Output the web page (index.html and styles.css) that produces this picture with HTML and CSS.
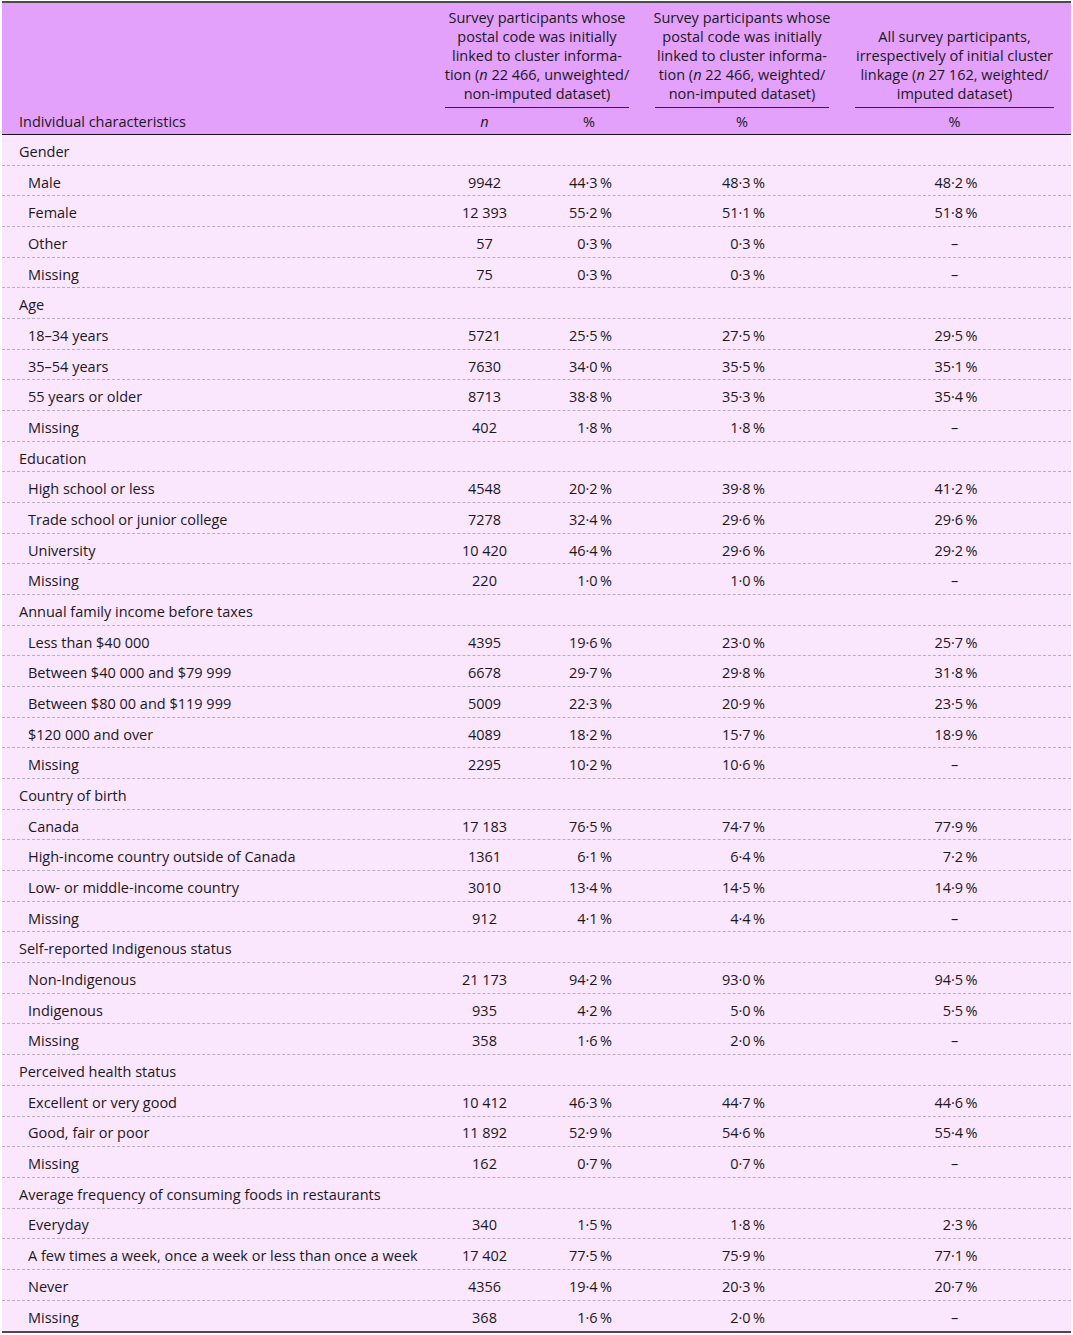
FILE: index.html
```html
<!DOCTYPE html>
<html lang="en">
<head>
    <meta charset="UTF-8">
    <meta name="viewport" content="width=device-width, initial-scale=1">
    <title>Individual characteristics</title>
    <link rel="stylesheet" href="styles.css">
</head>
<body>
<div class="data-table">
    <div class="table-head">
        <div class="group group-1">
            <div class="group-text">Survey participants whose<br>postal code was initially<br>linked to cluster informa-<br>tion (<i>n</i> 22 466, unweighted/<br>non-imputed dataset)</div>
            <div class="group-rule"></div>
        </div>
        <div class="group group-2">
            <div class="group-text">Survey participants whose<br>postal code was initially<br>linked to cluster informa-<br>tion (<i>n</i> 22 466, weighted/<br>non-imputed dataset)</div>
            <div class="group-rule"></div>
        </div>
        <div class="group group-3">
            <div class="group-text">All survey participants,<br>irrespectively of initial cluster<br>linkage (<i>n</i> 27 162, weighted/<br>imputed dataset)</div>
            <div class="group-rule"></div>
        </div>
        <div class="head-label">Individual characteristics</div>
        <div class="head-cell"><i>n</i></div>
        <div class="head-cell">%</div>
        <div class="head-cell">%</div>
        <div class="head-cell">%</div>
    </div>
    <div class="table-body">
        <div class="row section"><div class="label">Gender</div></div>
        <div class="row"><div class="label">Male</div><div class="n">9942</div><div class="p"><span>44·3&#8201;%</span></div><div class="p"><span>48·3&#8201;%</span></div><div class="p"><span>48·2&#8201;%</span></div></div>
        <div class="row"><div class="label">Female</div><div class="n">12 393</div><div class="p"><span>55·2&#8201;%</span></div><div class="p"><span>51·1&#8201;%</span></div><div class="p"><span>51·8&#8201;%</span></div></div>
        <div class="row"><div class="label">Other</div><div class="n">57</div><div class="p"><span>0·3&#8201;%</span></div><div class="p"><span>0·3&#8201;%</span></div><div class="p"><span class="dash">–</span></div></div>
        <div class="row"><div class="label">Missing</div><div class="n">75</div><div class="p"><span>0·3&#8201;%</span></div><div class="p"><span>0·3&#8201;%</span></div><div class="p"><span class="dash">–</span></div></div>

        <div class="row section"><div class="label">Age</div></div>
        <div class="row"><div class="label">18–34 years</div><div class="n">5721</div><div class="p"><span>25·5&#8201;%</span></div><div class="p"><span>27·5&#8201;%</span></div><div class="p"><span>29·5&#8201;%</span></div></div>
        <div class="row"><div class="label">35–54 years</div><div class="n">7630</div><div class="p"><span>34·0&#8201;%</span></div><div class="p"><span>35·5&#8201;%</span></div><div class="p"><span>35·1&#8201;%</span></div></div>
        <div class="row"><div class="label">55 years or older</div><div class="n">8713</div><div class="p"><span>38·8&#8201;%</span></div><div class="p"><span>35·3&#8201;%</span></div><div class="p"><span>35·4&#8201;%</span></div></div>
        <div class="row"><div class="label">Missing</div><div class="n">402</div><div class="p"><span>1·8&#8201;%</span></div><div class="p"><span>1·8&#8201;%</span></div><div class="p"><span class="dash">–</span></div></div>

        <div class="row section"><div class="label">Education</div></div>
        <div class="row"><div class="label">High school or less</div><div class="n">4548</div><div class="p"><span>20·2&#8201;%</span></div><div class="p"><span>39·8&#8201;%</span></div><div class="p"><span>41·2&#8201;%</span></div></div>
        <div class="row"><div class="label">Trade school or junior college</div><div class="n">7278</div><div class="p"><span>32·4&#8201;%</span></div><div class="p"><span>29·6&#8201;%</span></div><div class="p"><span>29·6&#8201;%</span></div></div>
        <div class="row"><div class="label">University</div><div class="n">10 420</div><div class="p"><span>46·4&#8201;%</span></div><div class="p"><span>29·6&#8201;%</span></div><div class="p"><span>29·2&#8201;%</span></div></div>
        <div class="row"><div class="label">Missing</div><div class="n">220</div><div class="p"><span>1·0&#8201;%</span></div><div class="p"><span>1·0&#8201;%</span></div><div class="p"><span class="dash">–</span></div></div>

        <div class="row section"><div class="label">Annual family income before taxes</div></div>
        <div class="row"><div class="label">Less than $40 000</div><div class="n">4395</div><div class="p"><span>19·6&#8201;%</span></div><div class="p"><span>23·0&#8201;%</span></div><div class="p"><span>25·7&#8201;%</span></div></div>
        <div class="row"><div class="label">Between $40 000 and $79 999</div><div class="n">6678</div><div class="p"><span>29·7&#8201;%</span></div><div class="p"><span>29·8&#8201;%</span></div><div class="p"><span>31·8&#8201;%</span></div></div>
        <div class="row"><div class="label">Between $80 00 and $119 999</div><div class="n">5009</div><div class="p"><span>22·3&#8201;%</span></div><div class="p"><span>20·9&#8201;%</span></div><div class="p"><span>23·5&#8201;%</span></div></div>
        <div class="row"><div class="label">$120 000 and over</div><div class="n">4089</div><div class="p"><span>18·2&#8201;%</span></div><div class="p"><span>15·7&#8201;%</span></div><div class="p"><span>18·9&#8201;%</span></div></div>
        <div class="row"><div class="label">Missing</div><div class="n">2295</div><div class="p"><span>10·2&#8201;%</span></div><div class="p"><span>10·6&#8201;%</span></div><div class="p"><span class="dash">–</span></div></div>

        <div class="row section"><div class="label">Country of birth</div></div>
        <div class="row"><div class="label">Canada</div><div class="n">17 183</div><div class="p"><span>76·5&#8201;%</span></div><div class="p"><span>74·7&#8201;%</span></div><div class="p"><span>77·9&#8201;%</span></div></div>
        <div class="row"><div class="label">High-income country outside of Canada</div><div class="n">1361</div><div class="p"><span>6·1&#8201;%</span></div><div class="p"><span>6·4&#8201;%</span></div><div class="p"><span>7·2&#8201;%</span></div></div>
        <div class="row"><div class="label">Low- or middle-income country</div><div class="n">3010</div><div class="p"><span>13·4&#8201;%</span></div><div class="p"><span>14·5&#8201;%</span></div><div class="p"><span>14·9&#8201;%</span></div></div>
        <div class="row"><div class="label">Missing</div><div class="n">912</div><div class="p"><span>4·1&#8201;%</span></div><div class="p"><span>4·4&#8201;%</span></div><div class="p"><span class="dash">–</span></div></div>

        <div class="row section"><div class="label">Self-reported Indigenous status</div></div>
        <div class="row"><div class="label">Non-Indigenous</div><div class="n">21 173</div><div class="p"><span>94·2&#8201;%</span></div><div class="p"><span>93·0&#8201;%</span></div><div class="p"><span>94·5&#8201;%</span></div></div>
        <div class="row"><div class="label">Indigenous</div><div class="n">935</div><div class="p"><span>4·2&#8201;%</span></div><div class="p"><span>5·0&#8201;%</span></div><div class="p"><span>5·5&#8201;%</span></div></div>
        <div class="row"><div class="label">Missing</div><div class="n">358</div><div class="p"><span>1·6&#8201;%</span></div><div class="p"><span>2·0&#8201;%</span></div><div class="p"><span class="dash">–</span></div></div>

        <div class="row section"><div class="label">Perceived health status</div></div>
        <div class="row"><div class="label">Excellent or very good</div><div class="n">10 412</div><div class="p"><span>46·3&#8201;%</span></div><div class="p"><span>44·7&#8201;%</span></div><div class="p"><span>44·6&#8201;%</span></div></div>
        <div class="row"><div class="label">Good, fair or poor</div><div class="n">11 892</div><div class="p"><span>52·9&#8201;%</span></div><div class="p"><span>54·6&#8201;%</span></div><div class="p"><span>55·4&#8201;%</span></div></div>
        <div class="row"><div class="label">Missing</div><div class="n">162</div><div class="p"><span>0·7&#8201;%</span></div><div class="p"><span>0·7&#8201;%</span></div><div class="p"><span class="dash">–</span></div></div>

        <div class="row section"><div class="label">Average frequency of consuming foods in restaurants</div></div>
        <div class="row"><div class="label">Everyday</div><div class="n">340</div><div class="p"><span>1·5&#8201;%</span></div><div class="p"><span>1·8&#8201;%</span></div><div class="p"><span>2·3&#8201;%</span></div></div>
        <div class="row"><div class="label">A few times a week, once a week or less than once a week</div><div class="n">17 402</div><div class="p"><span>77·5&#8201;%</span></div><div class="p"><span>75·9&#8201;%</span></div><div class="p"><span>77·1&#8201;%</span></div></div>
        <div class="row"><div class="label">Never</div><div class="n">4356</div><div class="p"><span>19·4&#8201;%</span></div><div class="p"><span>20·3&#8201;%</span></div><div class="p"><span>20·7&#8201;%</span></div></div>
        <div class="row"><div class="label">Missing</div><div class="n">368</div><div class="p"><span>1·6&#8201;%</span></div><div class="p"><span>2·0&#8201;%</span></div><div class="p"><span class="dash">–</span></div></div>
    </div>
</div>
</body>
</html>
```

FILE: styles.css
```css
* {
    margin: 0;
    padding: 0;
    box-sizing: border-box;
}

body {
    padding: 1px 2px 0;
    background: #ffffff;
    color: #1c181d;
    font-family: "Open Sans", "Liberation Sans", sans-serif;
    font-size: 14.5px;
}

.data-table {
    width: 1069px;
    border-top: 2px solid #4d4a4e;
    border-bottom: 2px solid #4d4a4e;
}

.table-head,
.row {
    display: grid;
    grid-template-columns: 435px 95px 114px 192px 233px;
}

.table-head {
    grid-template-rows: auto 26px;
    padding-top: 5px;
    background: #e3a1fb;
    border-bottom: 1px solid #161216;
}

.group {
    align-self: end;
    display: flex;
    flex-direction: column;
    align-items: center;
}

.group-text {
    line-height: 19px;
    text-align: center;
    white-space: nowrap;
}

.group-rule {
    align-self: stretch;
    margin-top: 4px;
    border-top: 1.5px solid #2e2630;
}

.group-1 {
    grid-column: 2 / 4;
}

.group-1 .group-text {
    padding-right: 9px;
}

.group-1 .group-rule {
    margin-left: 8px;
    margin-right: 17px;
}

.group-2 {
    grid-column: 4;
}

.group-2 .group-rule {
    margin-left: 9px;
    margin-right: 9px;
}

.group-3 {
    grid-column: 5;
}

.group-3 .group-rule {
    margin-left: 17px;
    margin-right: 17px;
}

.head-label,
.head-cell {
    grid-row: 2;
    align-self: center;
}

.head-label {
    grid-column: 1;
    padding-left: 17px;
}

.head-cell {
    text-align: center;
}

.table-body {
    background: #fae6fd;
}

.row {
    height: 30.68px;
    padding-top: 3px;
    align-items: center;
    border-bottom: 1px dashed #b9aebb;
}

.row:last-child {
    border-bottom: none;
}

.row .label {
    padding-left: 26px;
    white-space: nowrap;
}

.row.section .label {
    padding-left: 17px;
}

.n,
.p {
    text-align: center;
}

.p span {
    display: inline-block;
    width: 46px;
    text-align: right;
}

.p .dash {
    text-align: center;
}
```
